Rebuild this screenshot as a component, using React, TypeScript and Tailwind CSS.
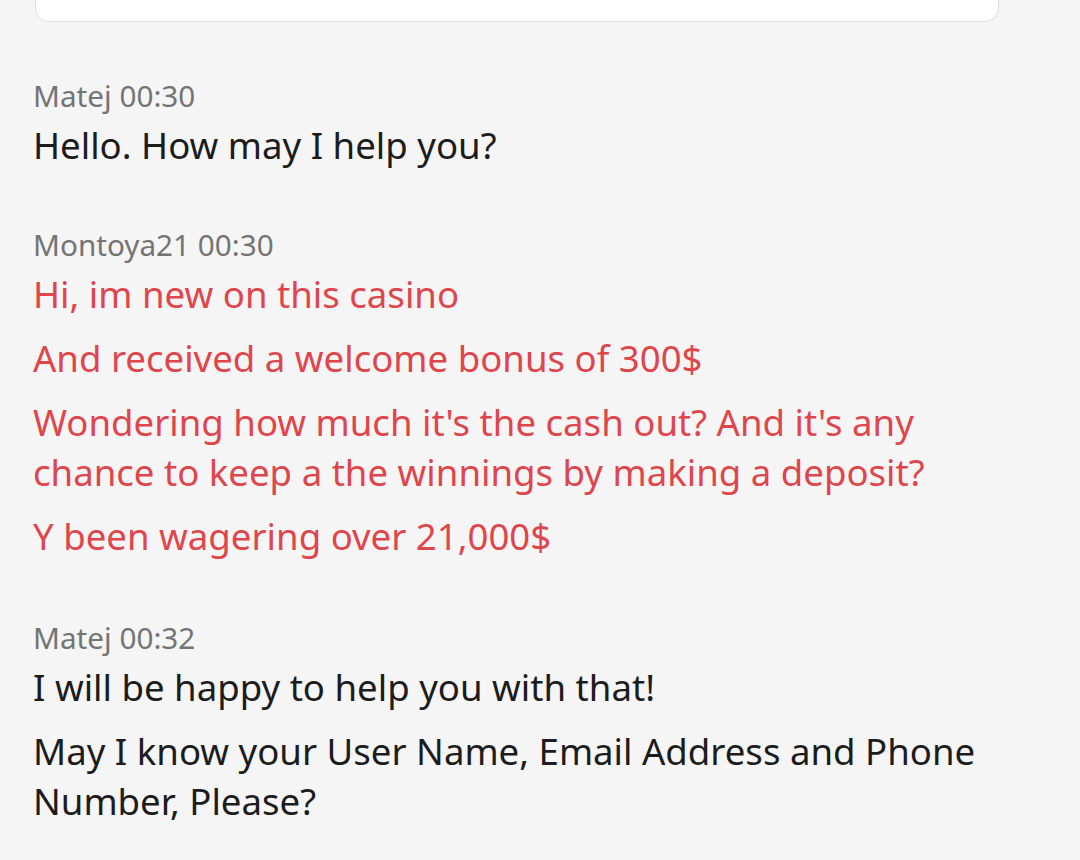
const messages = [
  {
    author: "Matej",
    time: "00:30",
    mine: false,
    lines: ["Hello. How may I help you?"],
  },
  {
    author: "Montoya21",
    time: "00:30",
    mine: true,
    lines: [
      "Hi, im new on this casino",
      "And received a welcome bonus of 300$",
      "Wondering how much it's the cash out? And it's any chance to keep a the winnings by making a deposit?",
      "Y been wagering over 21,000$",
    ],
  },
  {
    author: "Matej",
    time: "00:32",
    mine: false,
    lines: [
      "I will be happy to help you with that!",
      "May I know your User Name, Email Address and Phone Number, Please?",
    ],
  },
];

export default function App() {
  return (
    <div className="w-[1080px] h-[860px] overflow-hidden bg-[#f5f5f5] font-['Noto_Sans',sans-serif]">
      {/* card above, cut off */}
      <div className="mx-[35px] w-[964px] h-[42px] -mt-[20px] bg-white border border-[#dedede] rounded-b-[14px]" />

      <div className="pl-[33px] pr-[80px] pt-[54px] flex flex-col">
        {messages.map((m, i) => (
          <div
            key={i}
            className={`flex flex-col ${i === 0 ? "" : i === 1 ? "mt-[55px]" : "mt-[57px]"}`}
          >
            <div className="text-[29.7px] leading-[40px] text-[#747474]">
              {m.author} {m.time}
            </div>
            <div className="flex flex-col gap-[14px] mt-[4px]">
              {m.lines.map((l, j) => (
                <p
                  key={j}
                  className={`text-[36.6px] leading-[50px] ${
                    m.mine ? "text-[#e0454b]" : "text-[#1c1c1c]"
                  }`}
                >
                  {l}
                </p>
              ))}
            </div>
          </div>
        ))}
      </div>
    </div>
  );
}
